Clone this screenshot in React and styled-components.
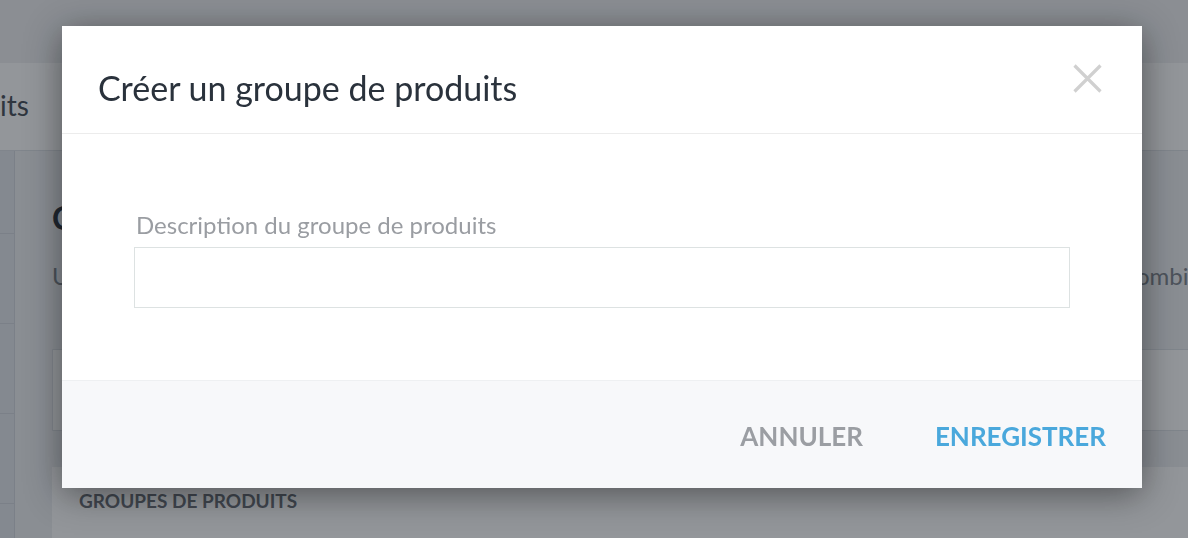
import React from "react";
import styled, { createGlobalStyle } from "styled-components";

const GlobalStyle = createGlobalStyle`
  html, body {
    margin: 0;
    padding: 0;
  }
  body {
    font-family: Lato, "Open Sans", "Liberation Sans", sans-serif;
    background: #eef0f3;
    overflow: hidden;
  }
  * {
    box-sizing: border-box;
  }
`;

const Page = styled.div`
  height: 100vh;
  overflow: hidden;
  background: #eef0f3;
`;

const TopBar = styled.div`
  height: 63px;
  background: #f0f1f3;
`;

const SubBar = styled.div`
  height: 88px;
  background: #ffffff;
  border-bottom: 1px solid #dde1e6;
  display: flex;
  align-items: center;
  padding-bottom: 4px;
`;

const TabLabel = styled.span`
  font-size: 28px;
  line-height: 34px;
  color: #4a5059;
`;

const Layout = styled.div`
  display: flex;
  overflow: hidden;
`;

const Sidebar = styled.div`
  width: 15px;
  flex-shrink: 0;
  background: #e3e7ed;
  border-right: 1px solid #d3d8de;
`;

const SideItem = styled.div`
  height: ${(p) => (p.first ? 83 : 90)}px;
  border-bottom: 1px solid #d3d8de;
`;

const Main = styled.div`
  flex: 1;
  padding: 47px 0 0 37px;
  min-width: 0;
`;

const PageTitle = styled.h1`
  margin: 0;
  font-size: 32px;
  line-height: 40px;
  font-weight: 700;
  color: #2f3640;
`;

const Intro = styled.p`
  margin: 23px 0 0;
  font-size: 24px;
  line-height: 30px;
  color: #80868e;
  white-space: nowrap;
`;

const Card = styled.div`
  margin-top: 58px;
  height: 82px;
  background: #ffffff;
  border: 1px solid #dde1e6;
  border-right: 0;
`;

const Panel = styled.div`
  margin-top: 36px;
  height: 120px;
  background: #ffffff;
  padding: 22px 27px 0;
`;

const PanelTitle = styled.div`
  font-size: 19px;
  line-height: 24px;
  font-weight: 700;
  color: #6b7078;
`;

const Backdrop = styled.div`
  position: fixed;
  inset: 0;
  background: rgba(15, 22, 30, 0.45);
  display: flex;
  justify-content: center;
  align-items: flex-start;
  padding: 26px 0 0 16px;
`;

const Modal = styled.div`
  width: 1080px;
  background: #ffffff;
  box-shadow: 0 6px 34px rgba(0, 0, 0, 0.45);
`;

const ModalHeader = styled.div`
  display: flex;
  justify-content: space-between;
  align-items: flex-start;
  padding: 38px 40px 25px 36px;
  border-bottom: 1px solid #ececec;
`;

const ModalTitle = styled.h2`
  margin: 4px 0 0;
  font-size: 34px;
  line-height: 40px;
  font-weight: 400;
  color: #2a323c;
`;

const CloseButton = styled.button`
  width: 29px;
  height: 29px;
  padding: 0;
  border: 0;
  background: none;
  cursor: pointer;
  display: flex;
`;

const ModalBody = styled.div`
  padding: 76px 72px 72px;
`;

const FieldLabel = styled.label`
  display: block;
  margin-left: 2px;
  font-size: 24px;
  line-height: 30px;
  color: #9a9da2;
`;

const TextInput = styled.input`
  display: block;
  width: 100%;
  height: 61px;
  margin-top: 7px;
  border: 1px solid #dde2e2;
  background: #ffffff;
  font-family: inherit;
  font-size: 24px;
  padding: 0 16px;
  outline: none;
`;

const ModalFooter = styled.div`
  height: 108px;
  background: #f7f8fa;
  border-top: 1px solid #eef0f2;
  display: flex;
  align-items: center;
  justify-content: flex-end;
  gap: 72px;
  padding: 2px 36px 0;
`;

const TextButton = styled.button`
  padding: 0;
  border: 0;
  background: none;
  font-family: inherit;
  font-size: 26px;
  line-height: 32px;
  font-weight: 700;
  color: ${(p) => (p.primary ? "#4aa8dc" : "#9b9ea3")};
  cursor: pointer;
`;

const CloseIcon = () => (
  <svg width="29" height="29" viewBox="0 0 29 29">
    <path
      d="M1.5 1.5 L27.5 27.5 M27.5 1.5 L1.5 27.5"
      stroke="#d0d0d0"
      strokeWidth="3.2"
      fill="none"
    />
  </svg>
);

export default function App() {
  return (
    <>
      <GlobalStyle />
      <Page>
        <TopBar />
        <SubBar>
          <TabLabel>its</TabLabel>
        </SubBar>
        <Layout>
          <Sidebar>
            <SideItem first />
            <SideItem />
            <SideItem />
            <SideItem />
          </Sidebar>
          <Main>
            <PageTitle>Catalogue</PageTitle>
            <Intro>
              Utilisez les groupes de produits pour regrouper tous vos articles
              et créer facilement et rapidement des combinaisons de produits.
            </Intro>
            <Card />
            <Panel>
              <PanelTitle>GROUPES DE PRODUITS</PanelTitle>
            </Panel>
          </Main>
        </Layout>
      </Page>
      <Backdrop>
        <Modal>
          <ModalHeader>
            <ModalTitle>Créer un groupe de produits</ModalTitle>
            <CloseButton aria-label="Fermer">
              <CloseIcon />
            </CloseButton>
          </ModalHeader>
          <ModalBody>
            <FieldLabel>Description du groupe de produits</FieldLabel>
            <TextInput type="text" />
          </ModalBody>
          <ModalFooter>
            <TextButton>ANNULER</TextButton>
            <TextButton primary>ENREGISTRER</TextButton>
          </ModalFooter>
        </Modal>
      </Backdrop>
    </>
  );
}
